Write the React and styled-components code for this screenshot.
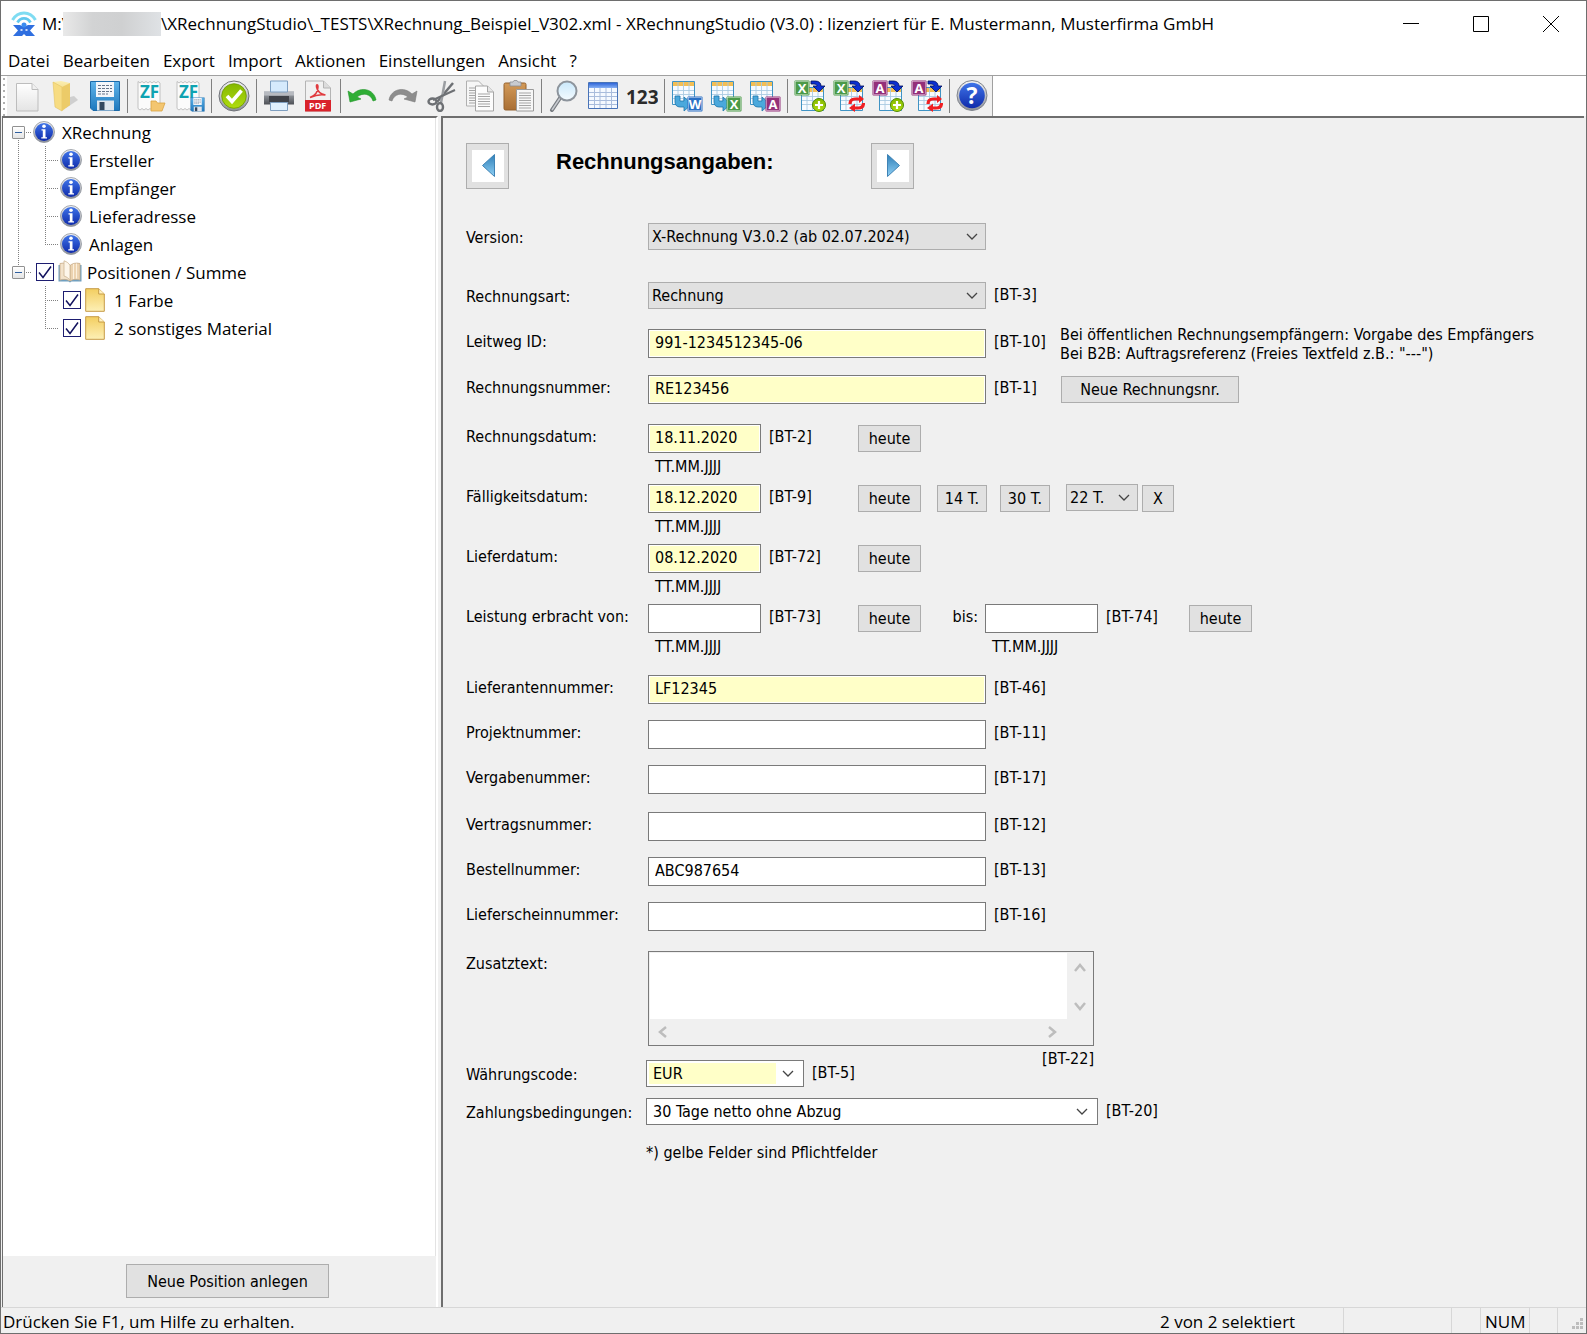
import styled, { createGlobalStyle } from "styled-components";

function App() {
  return (
    <Window>
      <GlobalStyle />
      <IconDefs />
      <TitleBar>
        <AppLogo />
        <Title>
          M:\<Hidden />\XRechnungStudio\_TESTS\XRechnung_Beispiel_V302.xml - XRechnungStudio (V3.0) : lizenziert für E. Mustermann, Musterfirma GmbH
        </Title>
        <WindowButton aria-label="Minimieren"><svg width="16" height="16"><path d="M0 7.5h16" stroke="#000" /></svg></WindowButton>
        <WindowButton aria-label="Maximieren"><svg width="16" height="16"><path d="M.5.5h15v15H.5z" fill="none" stroke="#000" /></svg></WindowButton>
        <WindowButton aria-label="Schließen"><svg width="16" height="16"><path d="M0 0l16 16M16 0L0 16" stroke="#000" /></svg></WindowButton>
      </TitleBar>
      <MenuBar>
        {menus.map((name) => <MenuItem key={name} type="button">{name}</MenuItem>)}
      </MenuBar>
      <ToolStrip>
        <Toolbar>
          <Grip />
          {tools.map((group, i) => (
            <ToolGroup key={i}>
              {group.map(([name, Icon]) => (
                <ToolButton key={name} type="button" aria-label={name}>
                  <svg width="32" height="32" viewBox="0 0 32 32"><Icon /></svg>
                </ToolButton>
              ))}
            </ToolGroup>
          ))}
        </Toolbar>
      </ToolStrip>
      <Body>
        <Side>
          <Tree>
            <TreeRow><Guide $from={14} $arm><Expander /></Guide><InfoIcon /><TreeText>XRechnung</TreeText></TreeRow>
            <TreeRow><Guide /><Guide $arm /><InfoIcon /><TreeText>Ersteller</TreeText></TreeRow>
            <TreeRow><Guide /><Guide $arm /><InfoIcon /><TreeText>Empfänger</TreeText></TreeRow>
            <TreeRow><Guide /><Guide $arm /><InfoIcon /><TreeText>Lieferadresse</TreeText></TreeRow>
            <TreeRow><Guide /><Guide $arm $last /><InfoIcon /><TreeText>Anlagen</TreeText></TreeRow>
            <TreeRow><Guide $arm $last><Expander /></Guide><Check id="pos" /><BookIcon /><TreeText as="label" htmlFor="pos">Positionen / Summe</TreeText></TreeRow>
            <TreeRow><Blank /><Guide $arm /><Check id="pos1" /><PaperIcon /><TreeText as="label" htmlFor="pos1">1 Farbe</TreeText></TreeRow>
            <TreeRow><Blank /><Guide $arm $last /><Check id="pos2" /><PaperIcon /><TreeText as="label" htmlFor="pos2">2 sonstiges Material</TreeText></TreeRow>
          </Tree>
          <SideFooter>
            <Button $w={203} $h={34}>Neue Position anlegen</Button>
          </SideFooter>
        </Side>
        <Content>
          <Header>
            <NavButton aria-label="Zurück">
              <span><svg width="32" height="32"><path d="M22.5 4.5v22L10.5 15.5z" fill="url(#arrow)" stroke="#3f83b5" strokeLinejoin="round" /></svg></span>
            </NavButton>
            <Heading>Rechnungsangaben:</Heading>
            <NavButton aria-label="Weiter">
              <span><svg width="32" height="32"><path d="M10.5 4.5v22L22.5 15.5z" fill="url(#arrow)" stroke="#3f83b5" strokeLinejoin="round" /></svg></span>
            </NavButton>
          </Header>

          <Row $gap={30}>
            <Label $select htmlFor="version">Version:</Label>
            <Select id="version" w={338} value="X-Rechnung V3.0.2 (ab 02.07.2024)" />
          </Row>
          <Row $gap={18}>
            <Label $select htmlFor="art">Rechnungsart:</Label>
            <Select id="art" w={338} value="Rechnung" />
            <Tag>[BT-3]</Tag>
          </Row>
          <Row $gap={16}>
            <Label htmlFor="leitweg">Leitweg ID:</Label>
            <Input id="leitweg" $required defaultValue="991-1234512345-06" />
            <Tag $w={66}>[BT-10]</Tag>
            <Help>
              Bei öffentlichen Rechnungsempfängern: Vorgabe des Empfängers<br />
              Bei B2B: Auftragsreferenz (Freies Textfeld z.B.: "---")
            </Help>
          </Row>
          <Row $gap={20}>
            <Label htmlFor="nummer">Rechnungsnummer:</Label>
            <Input id="nummer" $required defaultValue="RE123456" />
            <Tag $w={67}>[BT-1]</Tag>
            <Button $w={178}>Neue Rechnungsnr.</Button>
          </Row>

          <DateRow id="rdatum" label="Rechnungsdatum:" value="18.11.2020" tag="[BT-2]" />
          <DateRow id="fdatum" label="Fälligkeitsdatum:" value="18.12.2020" tag="[BT-9]">
            <Days>
              <Button $w={50}>14 T.</Button>
              <Button $w={50}>30 T.</Button>
            </Days>
            <Select id="tage" w={72} value="22 T." aria-label="Tage" />
            <Clear $w={32}>X</Clear>
          </DateRow>
          <DateRow id="ldatum" label="Lieferdatum:" value="08.12.2020" tag="[BT-72]" />
          <DateRow id="von" label="Leistung erbracht von:" tag="[BT-73]" gap={18}>
            <Until htmlFor="bis">bis:</Until>
            <DateField>
              <Input id="bis" $w={113} />
              <Hint>TT.MM.JJJJ</Hint>
            </DateField>
            <Tag $w={83}>[BT-74]</Tag>
            <Button $w={63}>heute</Button>
          </DateRow>

          {numbers.map(([id, label, tag, value, gap]) => (
            <Row key={id} $gap={gap}>
              <Label htmlFor={id}>{label}</Label>
              <Input id={id} $required={id === "lieferant"} defaultValue={value} />
              <Tag>{tag}</Tag>
            </Row>
          ))}

          <Row>
            <Label htmlFor="zusatz">Zusatztext:</Label>
            <Memo>
              <MemoBox>
                <textarea id="zusatz" />
                <ScrollV><Arrow turn={180} /><Arrow turn={0} /></ScrollV>
                <ScrollH><Arrow turn={90} /><Arrow turn={270} /></ScrollH>
              </MemoBox>
              <Tag>[BT-22]</Tag>
            </Memo>
          </Row>
          <CurrencyRow $gap={9}>
            <Label $select $w={180} htmlFor="waehrung">Währungscode:</Label>
            <Select id="waehrung" w={158} value="EUR" editable required />
            <Tag>[BT-5]</Tag>
          </CurrencyRow>
          <Row $gap={16}>
            <Label $select $w={180} htmlFor="zahlung">Zahlungsbedingungen:</Label>
            <Select id="zahlung" w={452} value="30 Tage netto ohne Abzug" editable />
            <Tag>[BT-20]</Tag>
          </Row>
          <Note>*) gelbe Felder sind Pflichtfelder</Note>
        </Content>
      </Body>
      <StatusBar>
        <Status $grow>Drücken Sie F1, um Hilfe zu erhalten.</Status>
        <Status $w={188}>2 von 2 selektiert</Status>
        <Status $w={108} />
        <Status $w={29} />
        <Status $w={49}>NUM</Status>
        <Status $w={28} />
        <SizeGrip />
      </StatusBar>
    </Window>
  );
}

const menus = ["Datei", "Bearbeiten", "Export", "Import", "Aktionen", "Einstellungen", "Ansicht", "?"];

// id, label, tag, value, space below
const numbers = [
  ["lieferant", "Lieferantennummer:", "[BT-46]", "LF12345", 16],
  ["projekt", "Projektnummer:", "[BT-11]", "", 16],
  ["vergabe", "Vergabenummer:", "[BT-17]", "", 18],
  ["vertrag", "Vertragsnummer:", "[BT-12]", "", 16],
  ["bestell", "Bestellnummer:", "[BT-13]", "ABC987654", 16],
  ["lieferschein", "Lieferscheinnummer:", "[BT-16]", "", 20],
];

function DateRow({ id, label, value, tag, gap = 7, children }) {
  return (
    <Row $gap={gap}>
      <Label htmlFor={id}>{label}</Label>
      <DateField>
        <Input id={id} $w={113} $required={!!value} defaultValue={value} />
        <Hint>TT.MM.JJJJ</Hint>
      </DateField>
      <Tag $w={89}>{tag}</Tag>
      <Button $w={63}>heute</Button>
      {children}
    </Row>
  );
}

function Select({ id, w, value, editable, required, ...rest }) {
  return (
    <SelectBox $w={w} $editable={editable} $required={required}>
      <select id={id} {...rest}><option>{value}</option></select>
      <svg width="12" height="8"><path d="M1 1l5 5 5-5" fill="none" stroke="#444" strokeWidth="1.3" /></svg>
    </SelectBox>
  );
}

function Check({ id }) {
  return (
    <CheckBox>
      <input id={id} type="checkbox" defaultChecked />
      <svg width="18" height="18"><path d="M3 9.5l4 5L15 3.500" fill="none" stroke="#12125e" strokeWidth="1.5" /></svg>
    </CheckBox>
  );
}

function Arrow({ turn }) {
  return (
    <svg width="14" height="14" viewBox="0 0 14 14">
      <path d="M2 4l5 6 5-6" fill="none" stroke="#bdbdbd" strokeWidth="2.5" transform={`rotate(${turn} 7 7)`} />
    </svg>
  );
}

/* ---------- icons ---------- */

function IconDefs() {
  const grads = [
    ["arrow", "#2f7fb8", "#8fd0f5"],
    ["blue", "#3f74e8", "#0f2bab"],
    ["ring", "#f4f4f6", "#8b8f98"],
    ["green", "#84b800", "#b0dc10"],
    ["folder", "#fbeeb0", "#e2b94c"],
    ["save", "#5fb4ea", "#1f78bd"],
    ["paper", "#ffffff", "#e4e4e4"],
    ["note", "#f3ce60", "#fdf0b6"],
    ["gray", "#a8acb2", "#4d5056"],
    ["glass", "#c9e8fb", "#f4fbff"],
    ["board", "#d39a58", "#a96f35"],
    ["head", "#2f66d8", "#86b0f5"],
  ];
  return (
    <Hide width="0" height="0" aria-hidden="true">
      <defs>
        {grads.map(([id, a, b]) => (
          <linearGradient key={id} id={id} x1="0" y1="0" x2="0" y2="1">
            <stop offset="0" stopColor={a} />
            <stop offset="1" stopColor={b} />
          </linearGradient>
        ))}
      </defs>
    </Hide>
  );
}

const AppLogo = () => (
  <svg width="26" height="26" viewBox="0 0 26 26">
    <path d="M1.5 9C7-.5 19-.5 24.5 9" fill="none" stroke="#7fdcf2" strokeWidth="3" />
    <path d="M6.5 11.5C9.5 6 16.5 6 19.5 11.5" fill="none" stroke="#62c8ee" strokeWidth="2.8" />
    <path d="M2 14h7l4 2 4-2h7l-5 5.500 5 5.500H2l5-5.500z" fill="#2f6fe0" />
    <circle cx="13" cy="14" r="2.500" fill="#3b8cf0" />
    <path d="M9.500 19h2M14.500 19h2" stroke="#fff" strokeWidth="1.5" />
    <path d="M11 25l2-2 2 2z" fill="#fff" />
  </svg>
);

const InfoIcon = () => (
  <svg width="24" height="22" viewBox="0 0 24 22">
    <circle cx="11" cy="11" r="10.5" fill="url(#ring)" stroke="#8e939c" strokeWidth=".8" />
    <circle cx="11" cy="11" r="9" fill="url(#blue)" />
    <circle cx="11" cy="5.2" r="1.8" fill="#fff" />
    <path d="M8.500 8.300h4v8h1.500v1.200H8.300v-1.200h1.500V9.500H8.500z" fill="#fff" />
  </svg>
);

const BookIcon = () => (
  <svg width="24" height="24" viewBox="0 0 24 24">
    <path d="M.5 5v16.500h10l1.500 1 1.500-1h10V5z" fill="#6f9fc0" />
    <path d="M2 3.500c4-1 8 0 10 2v15.500c-3-2-7-2-10-1z" fill="#f3e3cb" stroke="#c9ad8a" strokeWidth=".8" />
    <path d="M22 3.500c-4-1-8 0-10 2v15.500c3-2 7-2 10-1z" fill="#ecd3b1" stroke="#c9ad8a" strokeWidth=".8" />
    <path d="M6 .8c3 1 5 2.500 6 4.700v15c-1-2-3-3.500-6-4.500z" fill="#fdf6ea" stroke="#cdb696" strokeWidth=".8" />
    <path d="M15.500 4v15M18.500 3.500v15" stroke="#fbf0de" />
  </svg>
);

const PaperIcon = () => (
  <svg width="24" height="24" viewBox="0 0 24 24">
    <path d="M.7.7h13l5.600 5.300v17.300H.7z" fill="url(#note)" stroke="#c69a45" />
    <path d="M13.700.7V6h5.600" fill="#fff2c0" stroke="#c69a45" />
  </svg>
);

const NewIcon = () => (
  <g>
    <path d="M5.500 3.500h15.500l6 6v21.500H5.500z" fill="url(#paper)" stroke="#bdbdbd" />
    <path d="M21 3.500v6h6" fill="#f0f0f0" stroke="#bdbdbd" />
  </g>
);

const OpenIcon = () => (
  <g>
    <path d="M16 28l12-8-4-4-8 2z" fill="#b9b9b9" opacity=".6" />
    <path d="M3 2l8-1 9 2v22l-7 3z" fill="url(#folder)" />
    <path d="M3 2l9 5v24l-7-4z" fill="#f7dc82" stroke="#e3c263" strokeWidth=".6" />
    <path d="M12 7l8-4v22l-8 6z" fill="#eccb68" />
  </g>
);

const SaveShape = () => (
  <g>
    <path d="M1.500 1.500h29v29H4l-2.500-2.500z" fill="url(#save)" stroke="#1d6aa8" />
    <path d="M7 2h18v15H7z" fill="#f3f6fa" />
    <path d="M9 5.500h14M9 8.500h14M9 11.500h14M9 14h10" stroke="#66758a" strokeDasharray="3 1" />
    <path d="M8 20.500h17v10H8z" fill="#dfe5ec" />
    <path d="M10.500 22h5v8h-5z" fill="#33475e" />
  </g>
);

const ZfSheet = () => (
  <g>
    <path d="M4 1.500l2 1.500 2-1.500 2 1.500 2-1.500 2 1.500 2-1.500 2 1.500 2-1.500 2 1.500 2-1.500 2 1.500V30l-2-1.500-2 1.500-2-1.500-2 1.500-2-1.500-2 1.500-2-1.500-2 1.500-2-1.500-2 1.500-2-1.500z" fill="#fbfbfb" stroke="#b5b5b5" strokeWidth=".8" />
    <IconText x="6" y="18" fill="#0fa3b1" fontSize="17">ZF</IconText>
  </g>
);

const ZfOpenIcon = () => (
  <g>
    <ZfSheet />
    <path d="M17 31V21h5l1.500 2H31l-3 8z" fill="#f3c671" stroke="#d9a343" strokeWidth=".8" />
  </g>
);

const ZfSaveIcon = () => (
  <g>
    <ZfSheet />
    <g transform="translate(17 17) scale(.47)"><SaveShape /></g>
  </g>
);

const CheckIcon = () => (
  <g>
    <circle cx="16" cy="16" r="15" fill="url(#ring)" stroke="#6f7278" />
    <circle cx="16" cy="16" r="12.300" fill="url(#green)" stroke="#6e9a00" strokeWidth=".8" />
    <path d="M9 16l5 5.500 9.500-11" fill="none" stroke="#fff" strokeWidth="3.600" />
  </g>
);

const PrintIcon = () => (
  <g>
    <path d="M1 11.500h30v13H1z" fill="url(#gray)" />
    <path d="M1 11.500h30v4H1z" fill="#b7bac0" />
    <path d="M6 16h20v6H6z" fill="#3f4248" />
    <path d="M7.500 1h17v11h-17z" fill="#d5eafc" stroke="#7f9fc0" />
    <path d="M7.500 22.500h17v8h-17z" fill="#e0f0fd" stroke="#7f9fc0" />
  </g>
);

const PdfIcon = () => (
  <g>
    <path d="M3.500 1h18l7 7v23h-25z" fill="#f1f1f1" stroke="#b4b4b4" />
    <path d="M21.500 1v7h7" fill="#dcdcdc" stroke="#b4b4b4" />
    <path d="M8 17.500c5-2 8-6 8-10.500 0-3-2-3-1.500 0 .8 4 4 7 9 8-5-1-10 0-15.500 2.500z" fill="none" stroke="#e03a3e" strokeWidth="1.500" />
    <path d="M3 20h26v11.500H3z" fill="#d9232b" />
    <IconText x="7" y="29" fill="#fff" fontSize="9">PDF</IconText>
  </g>
);

const UndoIcon = () => <path d="M1 11l2 11 11-3-4-2c6-5 14-3 16 4l3-1C27 9 14 6 6 14z" fill="#2fae35" stroke="#1f9427" strokeWidth=".6" />;
const RedoIcon = () => <path d="M31 11l-2 11-11-3 4-2c-6-5-14-3-16 4l-3-1C5 9 18 6 26 14z" fill="#8d8d8d" stroke="#7a7a7a" strokeWidth=".6" />;

const CutIcon = () => (
  <g fill="none" stroke="#6d7074">
    <path d="M28 3L12 22" strokeWidth="2.500" />
    <path d="M20 1l-4 22" stroke="#9a9da1" strokeWidth="2.500" />
    <path d="M30 10L8 20" strokeWidth="2" />
    <ellipse cx="7.500" cy="21.500" rx="4" ry="3" strokeWidth="2.400" />
    <ellipse cx="15" cy="27" rx="3" ry="4" strokeWidth="2.400" />
  </g>
);

const Lines = ({ x, y, n, w }) => <path d={Array.from({ length: n }, (_, i) => `M${x} ${y + i * 2.5}h${w}`).join("")} stroke="#9b9b9b" strokeWidth=".9" />;

const CopyIcon = () => (
  <g>
    <path d="M2.500 1h12l5 5v20h-17z" fill="#f6f6f6" stroke="#b0b0b0" />
    <Lines x={5} y={8} n={7} w={10} />
    <path d="M11.500 6h12l6 6v19h-18z" fill="#fcfcfc" stroke="#a5a5a5" />
    <path d="M23.500 6v6h6" fill="#e6e6e6" stroke="#a5a5a5" />
    <Lines x={14} y={14} n={6} w={12} />
  </g>
);

const PasteIcon = () => (
  <g>
    <rect x="1" y="3" width="22" height="27" rx="1.500" fill="url(#board)" stroke="#94612c" />
    <path d="M7 2h3l1-1.500h3L15 2h3v4H7z" fill="#c8cbd0" stroke="#8b8e93" strokeWidth=".8" />
    <path d="M13.500 9.500h17v21.500h-17z" fill="#f7f7f7" stroke="#9a9a9a" />
    <Lines x={16} y={13} n={7} w={12} />
  </g>
);

const SearchIcon = () => (
  <g>
    <path d="M12 18L4 30" stroke="#777b80" strokeWidth="4" strokeLinecap="round" />
    <path d="M12 18L4 30" stroke="#c8cbd0" strokeWidth="1.500" />
    <circle cx="19" cy="11" r="9.500" fill="url(#glass)" stroke="#8d949c" strokeWidth="2" />
  </g>
);

const TableIcon = () => (
  <g>
    <path d="M1.500 2.500h29v26h-29z" fill="#f5f9ff" stroke="#4873b8" />
    <path d="M2 3h28v5H2z" fill="url(#head)" />
    <path d="M2 12.500h28M2 16.500h28M2 20.500h28M2 24.500h28M7.500 8v20M13 8v20M19 8v20M24.500 8v20" stroke="#a9bcdc" />
  </g>
);

const NumbersIcon = () => <IconText x="0" y="24" fill="#2b2b2b" fontSize="19">123</IconText>;

const Sheet = () => (
  <g>
    <path d="M1.500 1.500h22v23h-22z" fill="#f7fbff" stroke="#3f93c4" />
    <path d="M2 2h21v4H2z" fill="#f3bf55" />
    <path d="M2 10.500h21M2 14.500h21M2 18.500h21M7 2v22M12.500 2v22M18 2v22" stroke="#a9cbe2" strokeWidth=".9" />
  </g>
);

const Badge = ({ x, y, letter, color }) => (
  <g>
    <rect x={x + 0.5} y={y + 0.5} width="15" height="15" rx="1" fill={color} />
    <rect x={x + 1.5} y={y + 1.5} width="13" height="13" fill="none" stroke="#fff" strokeWidth=".6" opacity=".7" />
    <IconText x={x + 8} y={y + 13} textAnchor="middle" fill="#fff" fontSize="13">{letter}</IconText>
  </g>
);

const exportIcon = (letter, color) => () => (
  <g>
    <Sheet />
    <path d="M4 16h5v5h4v-4l8 7-8 7v-4H9c-3 0-5-2-5-5z" fill="#4aa8dc" stroke="#1f76ab" strokeWidth=".8" />
    <Badge x={16} y={16} letter={letter} color={color} />
  </g>
);

const importIcon = (letter, color, refresh) => () => (
  <g>
    <g transform="translate(6 6)"><Sheet /></g>
    <Badge x={0} y={0} letter={letter} color={color} />
    <path d="M17 1h4c4 0 6 2 6 5h4l-6 6-6-6h4c0-1-1-2-3-2h-3z" fill="#0d2fd0" stroke="#00105c" strokeWidth=".8" />
    {refresh ? (
      <g fill="none" stroke="#f01f22" strokeWidth="3.200">
        <path d="M17 24c0-4 2-5 5-5h5" />
        <path d="M26 15l5 4-5 4z" fill="#f01f22" stroke="none" />
        <path d="M30.500 23c0 4-2 5-5 5h-4" />
        <path d="M22 23.500l-6 4.500 6 4z" fill="#f01f22" stroke="none" />
      </g>
    ) : (
      <g>
        <circle cx="25" cy="25" r="6.500" fill="url(#green)" stroke="#4f8a00" />
        <path d="M25 21v8M21 25h8" stroke="#fff" strokeWidth="2.200" />
      </g>
    )}
  </g>
);

const HelpIcon = () => (
  <g>
    <circle cx="16" cy="15.500" r="15" fill="url(#ring)" stroke="#7f848c" />
    <circle cx="16" cy="15.500" r="12.800" fill="url(#blue)" />
    <IconText x="16" y="24" textAnchor="middle" fill="#fff" fontSize="23">?</IconText>
  </g>
);

const GREEN = "#4b9a48";
const PURPLE = "#94307a";

const tools = [
  [["Neu", NewIcon], ["Öffnen", OpenIcon], ["Speichern", SaveShape]],
  [["ZUGFeRD öffnen", ZfOpenIcon], ["ZUGFeRD speichern", ZfSaveIcon]],
  [["Prüfen", CheckIcon]],
  [["Drucken", PrintIcon], ["PDF", PdfIcon]],
  [["Rückgängig", UndoIcon], ["Wiederholen", RedoIcon], ["Ausschneiden", CutIcon], ["Kopieren", CopyIcon], ["Einfügen", PasteIcon]],
  [["Suchen", SearchIcon], ["Tabelle", TableIcon], ["Nummern", NumbersIcon]],
  [["Export Word", exportIcon("W", "#2a6fc4")], ["Export Excel", exportIcon("X", GREEN)], ["Export Access", exportIcon("A", PURPLE)]],
  [
    ["Excel hinzufügen", importIcon("X", GREEN)],
    ["Excel aktualisieren", importIcon("X", GREEN, true)],
    ["Access hinzufügen", importIcon("A", PURPLE)],
    ["Access aktualisieren", importIcon("A", PURPLE, true)],
  ],
  [["Hilfe", HelpIcon]],
];

/* ---------- styles ---------- */

const GlobalStyle = createGlobalStyle`
* {
  box-sizing: border-box;
}
body {
  margin: 0;
  background: #f0f0f0;
  color: #000;
  font-family: "Open Sans", "Noto Sans", sans-serif;
  font-size: 17px;
}
button, input, select, textarea {
  font: inherit;
  color: inherit;
}
svg {
  display: block;
  flex: none;
}
`;

const Hide = styled.svg`
position: absolute;
`;

const IconText = styled.text`
font-family: "Open Sans", "Noto Sans", sans-serif;
font-weight: 700;
`;

const Window = styled.div`
display: flex;
flex-direction: column;
min-height: 100vh;
border: 1px solid #6e6e6e;
`;

const TitleBar = styled.header`
display: flex;
align-items: center;
height: 45px;
padding-left: 10px;
background: #fff;
`;

const Title = styled.div`
display: flex;
align-items: center;
flex: 1;
margin-left: 5px;
white-space: nowrap;
`;

const Hidden = styled.span`
width: 98px;
height: 24px;
margin-left: -5px;
background: linear-gradient(90deg, #e9e9e9, #d2d3d4 30%, #cfd0d1 60%, #dfe2e5);
`;

const WindowButton = styled.button`
display: grid;
place-items: center;
width: 70px;
height: 44px;
padding: 0;
border: 0;
background: none;
`;

const MenuBar = styled.nav`
display: flex;
gap: 13px;
height: 29px;
padding-left: 7px;
background: #fff;
`;

const MenuItem = styled.button`
padding: 0;
border: 0;
background: none;
line-height: 29px;
`;

const ToolStrip = styled.div`
border-top: 1px solid #a0a0a0;
background: #fff;
`;

const Toolbar = styled.div`
display: flex;
width: max-content;
height: 40px;
padding-right: 1px;
border-right: 1px solid #a0a0a0;
background: #f0f0f0;
`;

const Grip = styled.div`
width: 6px;
background: radial-gradient(#b0b0b0 1px, #fff 1px) 0 0 / 6px 6px;
`;

const ToolGroup = styled.div`
display: flex;
& + & {
  padding-left: 6px;
  background: linear-gradient(#808080, #808080) 3px 3px / 1px 34px no-repeat;
}
`;

const ToolButton = styled.button`
display: grid;
place-items: center;
width: 39px;
padding: 0;
border: 0;
background: none;
`;

const Body = styled.main`
display: flex;
flex: 1;
gap: 3px;
padding: 0 2px 0 1px;
background: #f0f0f0;
`;

const Side = styled.aside`
display: flex;
flex-direction: column;
width: 436px;
border-top: 2px solid #6e6e6e;
border-left: 1px solid #6e6e6e;
border-right: 2px solid #fff;
`;

const Tree = styled.ul`
flex: 1;
margin: 0;
padding: 0 0 0 2px;
border-right: 1px solid #e3e3e3;
background: #fff;
list-style: none;
`;

const TreeRow = styled.li`
display: flex;
align-items: center;
gap: 1px;
height: 28px;
`;

const Blank = styled.span`
width: 26px;
`;

const Guide = styled.span`
display: flex;
align-items: center;
width: ${(props) => (props.$arm ? 27 : 26)}px;
height: 28px;
padding-left: 7px;
background-image:
  repeating-linear-gradient(to bottom, #808080 0 1px, transparent 1px 2px),
  repeating-linear-gradient(to right, #808080 0 1px, transparent 1px 2px);
background-size: 1px ${(props) => (props.$last ? 14 : 28)}px, ${(props) => (props.$arm ? 14 : 0)}px 1px;
background-position: 13px ${(props) => props.$from || 0}px, 13px 14px;
background-repeat: no-repeat;
`;

const Expander = styled.span`
width: 13px;
height: 13px;
border: 1px solid #919191;
border-radius: 1px;
background: linear-gradient(#2f5f9f, #2f5f9f) 2px 5px / 7px 1px no-repeat, linear-gradient(#fff, #e4e4e4);
`;

const TreeText = styled.span`
margin-left: 4px;
white-space: nowrap;
`;

const CheckBox = styled.span`
display: grid;
margin: 0 3px;
input, svg {
  grid-area: 1 / 1;
}
input {
  appearance: none;
  width: 18px;
  height: 18px;
  margin: 0;
  border: 1px solid #1d1d70;
  background: #fff;
}
svg {
  pointer-events: none;
}
`;

const SideFooter = styled.div`
padding: 8px 0 9px 123px;
`;

const Content = styled.form`
flex: 1;
padding: 25px 0 20px 23px;
border-top: 2px solid #6e6e6e;
border-left: 2px solid #6e6e6e;
font-family: "DejaVu Sans Condensed", "DejaVu Sans", sans-serif;
font-size: 16px;
`;

const Header = styled.div`
display: flex;
margin-bottom: 34px;
`;

const NavButton = styled.button.attrs({ type: "button" })`
display: grid;
place-items: center;
width: 43px;
height: 46px;
padding: 0;
border: 1px solid #adadad;
background: #e1e1e1;
span {
  background: #fff;
}
`;

const Heading = styled.h1`
width: 362px;
margin: 0;
padding: 6px 0 0 47px;
font-family: "Liberation Sans", Arial, sans-serif;
font-size: 22px;
font-weight: 700;
line-height: 26px;
`;

const Row = styled.div`
display: flex;
align-items: flex-start;
min-height: 29px;
margin-bottom: ${(props) => props.$gap || 0}px;
`;

const CurrencyRow = styled(Row)`
margin-top: -12px;
`;

const Label = styled.label`
width: ${(props) => props.$w || 182}px;
height: 29px;
line-height: ${(props) => (props.$select ? 30 : 26)}px;
white-space: nowrap;
`;

const Input = styled.input`
width: ${(props) => props.$w || 338}px;
height: 29px;
padding: 0 6px 2px;
border: 1px solid #7a7a7a;
outline: 0;
background: ${(props) => (props.$required ? "#ffffc8" : "#fff")};
box-shadow: inset 0 0 0 1px #fff;
`;

const Tag = styled.span`
width: ${(props) => (props.$w ? props.$w + "px" : "auto")};
margin-left: 8px;
line-height: 26px;
white-space: nowrap;
`;

const Help = styled.p`
margin: -4px 0;
line-height: 19px;
white-space: nowrap;
`;

const Button = styled.button.attrs({ type: "button" })`
width: ${(props) => props.$w}px;
height: ${(props) => props.$h || 27}px;
margin-top: ${(props) => (props.$h ? 0 : 1)}px;
padding: 0;
border: 1px solid #adadad;
background: #e1e1e1;
font-family: "DejaVu Sans Condensed", "DejaVu Sans", sans-serif;
font-size: 16px;
white-space: nowrap;
`;

const Days = styled.div`
display: flex;
gap: 13px;
margin: 0 16px;
`;

const Clear = styled(Button)`
margin-left: 4px;
`;

const Until = styled.label`
width: 64px;
padding-right: 7px;
line-height: 26px;
text-align: right;
`;

const DateField = styled.div`
display: flex;
flex-direction: column;
gap: 4px;
`;

const Hint = styled.span`
padding-left: 7px;
line-height: 20px;
`;

const SelectBox = styled.div`
display: grid;
align-items: center;
width: ${(props) => props.$w}px;
height: 27px;
padding: ${(props) => (props.$editable ? 2 : 0)}px;
border: 1px solid ${(props) => (props.$editable ? "#7a7a7a" : "#adadad")};
background: ${(props) => (props.$editable ? "#fff" : "#e1e1e1")};
select, svg {
  grid-area: 1 / 1;
}
select {
  appearance: none;
  width: 100%;
  height: 100%;
  padding: 0 0 0 ${(props) => (props.$editable ? 4 : 3)}px;
  border: 0;
  border-right: ${(props) => (props.$required ? 25 : 0)}px solid #fff;
  border-radius: 0;
  outline: 0;
  background: ${(props) => (props.$required ? "#ffffc8" : "transparent")};
}
svg {
  justify-self: end;
  margin-right: 7px;
  pointer-events: none;
}
`;

const Memo = styled.div`
display: flex;
flex-direction: column;
align-items: flex-end;
`;

const MemoBox = styled.div`
display: grid;
grid-template-columns: 1fr 25px;
grid-template-rows: 1fr 25px;
width: 446px;
height: 95px;
padding: 1px;
border: 1px solid #7a7a7a;
background: #f0f0f0;
textarea {
  border: 0;
  outline: 0;
  resize: none;
  background: #fff;
}
`;

const ScrollV = styled.div`
display: flex;
flex-direction: column;
align-items: center;
justify-content: space-between;
padding: 8px 0 6px;
`;

const ScrollH = styled.div`
display: flex;
align-items: center;
justify-content: space-between;
padding: 0 8px 0 6px;
`;

const Note = styled.p`
margin: 0 0 0 180px;
line-height: 20px;
`;

const StatusBar = styled.footer`
display: flex;
height: 26px;
border-top: 1px solid #d7d7d7;
background: #f0f0f0;
`;

const Status = styled.div`
flex: ${(props) => (props.$grow ? "1" : "none")};
width: ${(props) => props.$w}px;
padding-left: ${(props) => (props.$grow ? 2 : 4)}px;
border-right: ${(props) => (props.$grow ? 0 : 1)}px solid #d7d7d7;
line-height: 28px;
white-space: nowrap;
`;

const SizeGrip = styled.div`
align-self: flex-end;
width: 12px;
height: 12px;
margin: 0 2px 3px 14px;
background: conic-gradient(#bdbdbd 0 0) 8px 0 / 3px 3px no-repeat,
  repeating-linear-gradient(to right, #bdbdbd 0 3px, transparent 3px 4px) 4px 4px / 7px 3px no-repeat,
  repeating-linear-gradient(to right, #bdbdbd 0 3px, transparent 3px 4px) 0 8px / 11px 3px no-repeat;
`;

export default App;
